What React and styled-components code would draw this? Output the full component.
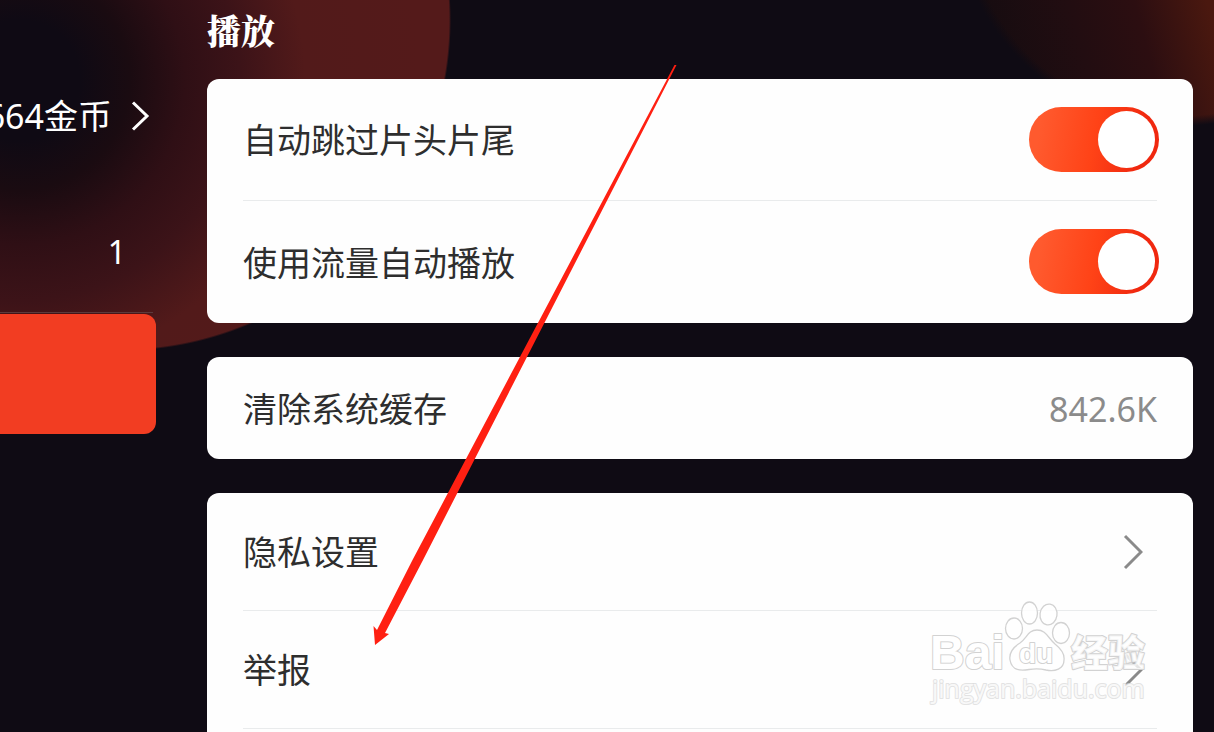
import React from "react";
import styled, { createGlobalStyle } from "styled-components";

const GlobalStyle = createGlobalStyle`
  * { box-sizing: border-box; }
  body {
    margin: 0;
    background: #0f0b14;
    font-family: "Noto Sans", "Noto Sans CJK SC", sans-serif;
  }
`;

const Page = styled.div`
  position: relative;
  display: flex;
  gap: 51px;
  height: 100vh;
  overflow: hidden;
  padding-right: 21px;
  background:
    radial-gradient(circle at 120px 20px, transparent 329px, #0f0b14 331px) 0 0 / 600px 480px no-repeat,
    radial-gradient(circle at 20px 80px, #0f0a14 60px, #1a0b11 110px, #2f0f15 165px, #3c1318 220px, #521a1a 285px, #541a1a 400px) 0 0 / 480px 360px no-repeat,
    radial-gradient(circle at calc(100% - 34px) -100px, transparent 216px, #0f0b14 226px) 100% 0 / 320px 160px no-repeat,
    linear-gradient(75deg, #160c10 35%, #220d11 60%, #2c0e11 78%, #4a180f 98%) 100% 0 / 320px 160px no-repeat,
    #0f0b14;
`;

const Side = styled.aside`
  flex: 0 0 156px;
  min-width: 0;
  display: flex;
  flex-direction: column;
  color: #fff;
`;

const CoinLink = styled.a`
  display: flex;
  justify-content: flex-end;
  align-items: center;
  gap: 18px;
  height: 52px;
  margin-top: 90px;
  padding-right: 6px;
  color: #fff;
  font-size: 34px;
  line-height: 52px;
  white-space: nowrap;
  text-decoration: none;
`;

const Count = styled.p`
  margin: 84px 3px 0 0;
  padding: 0 27px 34px 0;
  height: 87px;
  border-bottom: 1px solid #5c3a3c;
  text-align: right;
  font-size: 32px;
  line-height: 52px;
`;

const Action = styled.button`
  height: 120px;
  margin-top: 1px;
  border: 0;
  border-radius: 0 12px 12px 0;
  background: #f23d22;
`;

const Main = styled.main`
  flex: 1;
  min-width: 0;
  display: flex;
  flex-direction: column;
  gap: 34px;
`;

const Section = styled.section`
  display: flex;
  flex-direction: column;
`;

const Heading = styled.h2`
  margin: 0;
  height: 79px;
  padding-top: 5px;
  color: #fff;
  font-family: "Noto Serif CJK SC", "Noto Sans CJK SC", serif;
  font-size: 34px;
  font-weight: 900;
  line-height: 50px;
`;

const Card = styled.div`
  flex: ${(p) => (p.$fill ? "1 0 auto" : "0 0 auto")};
  padding: 0 36px;
  border-radius: ${(p) => (p.$fill ? "12px 12px 0 0" : "12px")};
  background: #fefefe;
`;

const Row = styled.div`
  display: flex;
  align-items: center;
  justify-content: space-between;
  width: 100%;
  height: ${(p) => p.$height}px;
  padding: 1px 0 0;
  border: 0;
  border-bottom: ${(p) => (p.$line ? "1px solid #e9ebec" : "0")};
  background: none;
  color: #2e2e2e;
  font-family: inherit;
  font-size: 34px;
  font-weight: 400;
  line-height: 50px;
  text-align: left;
`;

const Value = styled.span`
  color: #8b8b8b;
`;

const Switch = styled.input`
  appearance: none;
  display: flex;
  align-items: center;
  width: 130px;
  height: 65px;
  margin: 0 -2px 2px 0;
  padding: 0 4px;
  border-radius: 33px;
  background: linear-gradient(100deg, #ff5a2e 10%, #ff4317 50%, #f0280f 85%);
  &::before {
    content: "";
    width: 57px;
    height: 57px;
    margin-left: auto;
    border-radius: 50%;
    background: #fff;
  }
`;

const ChevronIcon = styled.svg`
  flex: none;
  width: 20px;
  height: 38px;
  margin-right: ${(p) => (p.$inset ? "14px" : "0")};
  fill: none;
  stroke: ${(p) => p.$color};
  stroke-width: 3;
`;

const Arrow = styled.svg`
  position: absolute;
  left: 370px;
  top: 60px;
  width: 310px;
  height: 590px;
  pointer-events: none;
`;

const Watermark = styled.svg`
  position: absolute;
  right: 60px;
  top: 596px;
  width: 230px;
  height: 116px;
  pointer-events: none;
`;

function Chevron({ color, inset, small }) {
  return (
    <ChevronIcon viewBox="0 0 20 38" $color={color} $inset={inset} aria-hidden="true">
      <path d={small ? "M3 5.5 17 19 3 32.5" : "M2 3 18 19 2 35"} />
    </ChevronIcon>
  );
}

function SwitchRow({ id, label, line }) {
  return (
    <Row $height={122} $line={line}>
      <label htmlFor={id}>{label}</label>
      <Switch id={id} type="checkbox" role="switch" defaultChecked />
    </Row>
  );
}

function LinkRow({ label }) {
  return (
    <Row as="button" type="button" $height={118} $line>
      {label}
      <Chevron color="#8a8a8a" inset />
    </Row>
  );
}

export default function App() {
  return (
    <>
      <GlobalStyle />
      <Page>
        <Side>
          <CoinLink href="#coins">
            664金币
            <Chevron color="#fff" small />
          </CoinLink>
          <Count>1</Count>
          <Action type="button" aria-label="金币" />
        </Side>
        <Main>
          <Section>
            <Heading>播放</Heading>
            <Card>
              <SwitchRow id="skip" label="自动跳过片头片尾" line />
              <SwitchRow id="data" label="使用流量自动播放" />
            </Card>
          </Section>
          <Card>
            <Row as="div" $height={102}>
              <span>清除系统缓存</span>
              <Value>842.6K</Value>
            </Row>
          </Card>
          <Card $fill>
            <LinkRow label="隐私设置" />
            <LinkRow label="举报" />
          </Card>
        </Main>
        <Arrow viewBox="370 60 310 590" aria-hidden="true">
          <path fill="#ff2012" d="M674.5 65H676.5L422.5 561L385 633L389 634L375 645L373.5 626L377 630L412.5 560Z" />
        </Arrow>
        <Watermark viewBox="924 596 230 116" aria-hidden="true">
          <g fill="#fff" fillOpacity="0.85" stroke="#d2d2d2" strokeWidth="1.3" strokeLinejoin="round">
            <ellipse cx="1014" cy="628.5" rx="8.5" ry="10.5" />
            <ellipse cx="1029.5" cy="613" rx="8" ry="11" />
            <ellipse cx="1048.5" cy="614.5" rx="8.5" ry="10.5" transform="rotate(8 1048.5 614.5)" />
            <ellipse cx="1061" cy="633" rx="8.5" ry="10.5" />
            <path d="M1037 630C1028 630 1027 638 1020 643C1012 648 1009 654 1010 660C1012 671 1021 671 1029 669.5C1035 668.5 1040 668.5 1046 670C1055 672 1064 669 1064 660C1065 653 1060 648 1055 644C1048 638 1046 630 1037 630Z" />
            <g fontFamily="Liberation Sans, sans-serif" fontWeight="700" paintOrder="stroke" fillOpacity="1">
              <text x="930" y="669" fontSize="48" strokeWidth="2">Bai</text>
              <text x="1019" y="663" fontSize="28" strokeWidth="2">du</text>
              <text x="1071" y="667" fontSize="37" strokeWidth="2" fontWeight="900" fillOpacity="0.8" fontFamily="Noto Sans CJK SC, sans-serif">经验</text>
            </g>
            <text x="932" y="698" fontSize="25" stroke="#dcdcdc" strokeWidth="2" strokeOpacity="0.8" fillOpacity="0.8" paintOrder="stroke" fontFamily="Open Sans, sans-serif">jingyan.baidu.com</text>
          </g>
        </Watermark>
      </Page>
    </>
  );
}
